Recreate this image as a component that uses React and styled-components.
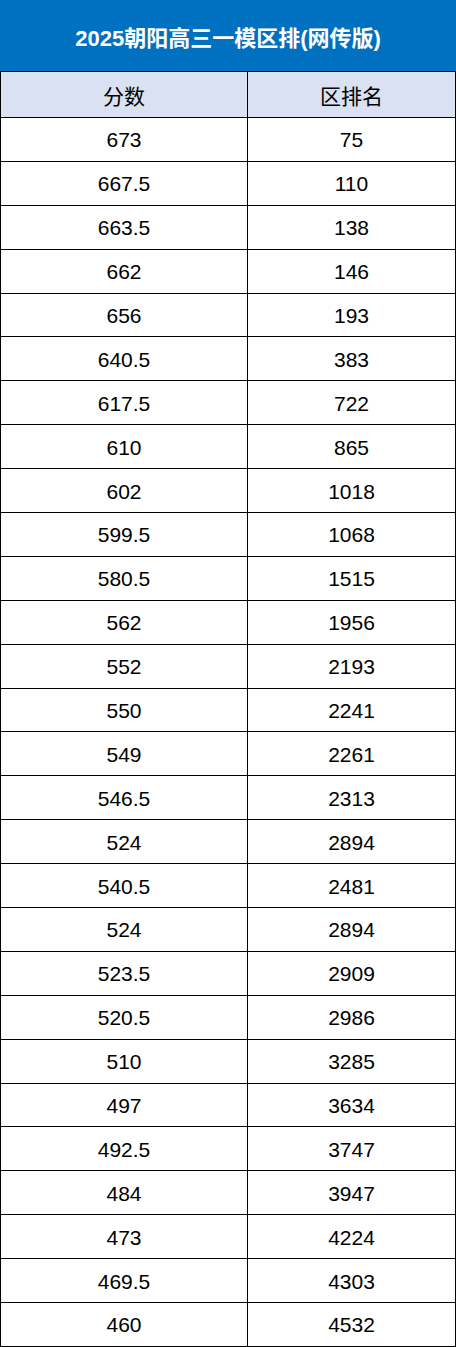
import React from 'react';
import styled, { createGlobalStyle } from 'styled-components';

const rows = [
  ['673', '75'],
  ['667.5', '110'],
  ['663.5', '138'],
  ['662', '146'],
  ['656', '193'],
  ['640.5', '383'],
  ['617.5', '722'],
  ['610', '865'],
  ['602', '1018'],
  ['599.5', '1068'],
  ['580.5', '1515'],
  ['562', '1956'],
  ['552', '2193'],
  ['550', '2241'],
  ['549', '2261'],
  ['546.5', '2313'],
  ['524', '2894'],
  ['540.5', '2481'],
  ['524', '2894'],
  ['523.5', '2909'],
  ['520.5', '2986'],
  ['510', '3285'],
  ['497', '3634'],
  ['492.5', '3747'],
  ['484', '3947'],
  ['473', '4224'],
  ['469.5', '4303'],
  ['460', '4532'],
];

const GlobalStyle = createGlobalStyle`
  body {
    margin: 0;
    background: #ffffff;
    font-family: "Liberation Sans", Arial, "Noto Sans CJK SC", sans-serif;
  }
`;

const Table = styled.table`
  width: 456px;
  border-collapse: collapse;
  table-layout: fixed;
`;

const TitleCell = styled.th`
  height: 71px;
  padding: 0;
  background: #0070c0;
  color: #ffffff;
  font-size: 22px;
  font-weight: 700;
  text-align: center;
  border-bottom: 1px solid #000;
  border-left: 1px solid #0070c0;
  border-right: 1px solid #0070c0;
`;

const HeadCell = styled.th`
  height: 45px;
  padding: 0;
  background: #d9e1f2;
  color: #000;
  font-size: 21px;
  font-weight: 400;
  text-align: center;
  border: 1px solid #000;
`;

const Cell = styled.td`
  height: 40.9px;
  padding: 2px 0 0;
  font-size: 21px;
  line-height: 24px;
  color: #000;
  text-align: center;
  border: 1px solid #000;
`;

export default function App() {
  return (
    <>
      <GlobalStyle />
      <Table>
        <colgroup>
          <col style={{ width: 247 }} />
          <col />
        </colgroup>
        <thead>
          <tr>
            <TitleCell colSpan={2}>2025朝阳高三一模区排(网传版)</TitleCell>
          </tr>
          <tr>
            <HeadCell>分数</HeadCell>
            <HeadCell>区排名</HeadCell>
          </tr>
        </thead>
        <tbody>
          {rows.map(([score, rank], i) => (
            <tr key={i}>
              <Cell>{score}</Cell>
              <Cell>{rank}</Cell>
            </tr>
          ))}
        </tbody>
      </Table>
    </>
  );
}
